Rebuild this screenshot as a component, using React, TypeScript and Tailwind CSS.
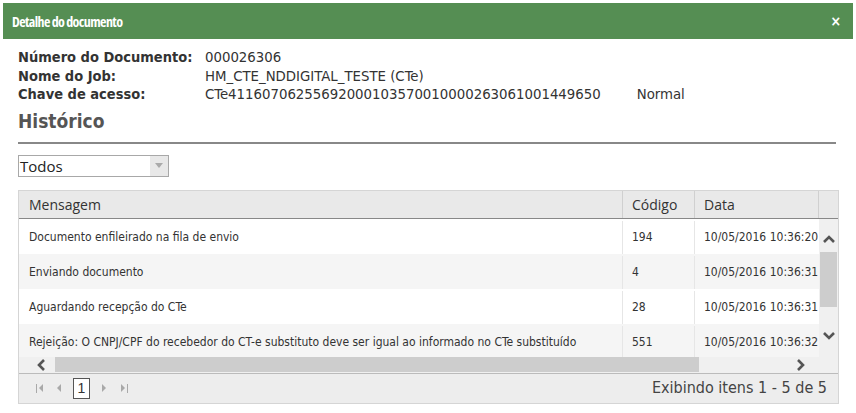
import React from "react";

const rows = [
  { m: "Documento enfileirado na fila de envio", c: "194", d: "10/05/2016 10:36:20" },
  { m: "Enviando documento", c: "4", d: "10/05/2016 10:36:31" },
  { m: "Aguardando recepção do CTe", c: "28", d: "10/05/2016 10:36:31" },
  { m: "Rejeição: O CNPJ/CPF do recebedor do CT-e substituto deve ser igual ao informado no CTe substituído", c: "551", d: "10/05/2016 10:36:32" },
];

const tah = { fontFamily: '"DejaVu Sans Condensed", "DejaVu Sans", sans-serif', fontStretch: "semi-condensed" } as React.CSSProperties;
const seg = { fontFamily: '"Open Sans", "Noto Sans", sans-serif', fontStretch: "normal" } as React.CSSProperties;
const title = { fontFamily: '"Open Sans", "Noto Sans", sans-serif', fontStretch: "75%" } as React.CSSProperties;

function Chevron({ dir, className }: { dir: "up" | "down" | "left" | "right"; className?: string }) {
  const d =
    dir === "up" ? "M2 9 L7 4 L12 9" : dir === "down" ? "M2 5 L7 10 L12 5" : dir === "left" ? "M9 2 L4 7 L9 12" : "M5 2 L10 7 L5 12";
  return (
    <svg width="14" height="14" viewBox="0 0 14 14" className={className}>
      <path d={d} fill="none" stroke="#555" strokeWidth="2.6" />
    </svg>
  );
}

function Tri({ dir }: { dir: "left" | "right" }) {
  return (
    <svg width="6" height="10" viewBox="0 0 6 10">
      {dir === "left" ? <path d="M5 1 L1 5 L5 9 Z" fill="#a9a9a9" /> : <path d="M1 1 L5 5 L1 9 Z" fill="#a9a9a9" />}
    </svg>
  );
}

export default function App() {
  return (
    <div className="w-[856px] h-[413px] bg-white p-[3px] overflow-hidden" style={tah}>
      <div className="h-[36px] bg-[#558e53] flex items-center justify-between pl-[9px] pr-[12px]">
        <span className="text-white font-bold text-[14px] tracking-[-0.6px]" style={title}>Detalhe do documento</span>
        <span className="text-white font-bold text-[14px] leading-none">×</span>
      </div>
      <div className="px-[15px]">
        <div className="pt-[9px] text-[14.5px] leading-[18.5px] text-[#333]">
          <div className="flex">
            <span className="w-[187px] font-bold">Número do Documento:</span>
            <span className="text-[14.8px]">000026306</span>
          </div>
          <div className="flex">
            <span className="w-[187px] font-bold">Nome do Job:</span>
            <span className="text-[14.8px]">HM_CTE_NDDIGITAL_TESTE (CTe)</span>
          </div>
          <div className="flex">
            <span className="w-[187px] font-bold">Chave de acesso:</span>
            <span className="text-[14.8px]">CTe41160706255692000103570010000263061001449650</span>
            <span className="ml-[36px] text-[14.8px]">Normal</span>
          </div>
        </div>
        <div className="mt-[5px] text-[19px] font-bold text-[#555] leading-[24px]">Histórico</div>
        <div className="mt-[9px] h-[2px] bg-[#888] w-[818px]"></div>
        <div className="mt-[11px] w-[151px] h-[22px] border border-[#a8a8a8] flex bg-white">
          <span className="flex-1 text-[15px] leading-[20px] pl-[1px] text-[#222]" style={seg}>Todos</span>
          <span className="w-[18px] bg-[#e8e8e8] flex items-center justify-center">
            <svg width="8" height="5" viewBox="0 0 8 5"><path d="M0 0 L8 0 L4 5 Z" fill="#aaa" /></svg>
          </span>
        </div>
        <div className="mt-[13px] w-[821px] border border-[#d5d5d5]">
          <div className="flex h-[28px] bg-[#e9e9e9] border-b border-[#888] text-[14px] text-[#333]" style={seg}>
            <div className="w-[604px] pl-[10px] flex items-center border-r border-[#d0d0d0]">Mensagem</div>
            <div className="w-[72px] pl-[9px] flex items-center border-r border-[#d0d0d0]">Código</div>
            <div className="w-[124px] pl-[9px] flex items-center border-r border-[#d0d0d0]">Data</div>
            <div className="flex-1"></div>
          </div>
          <div className="flex h-[138px] overflow-hidden">
            <div className="w-[800px]">
              {rows.map((r, i) => (
                <div key={i} className={`flex h-[35px] pt-[2px] shrink-0 text-[12px] text-[#333] ${i % 2 === 1 ? "bg-[#f5f5f5]" : "bg-white"}`}>
                  <div className="w-[604px] pl-[10px] flex items-center border-r border-[#e6e6e6] whitespace-nowrap overflow-hidden">{r.m}</div>
                  <div className="w-[72px] pl-[9px] flex items-center border-r border-[#e6e6e6]">{r.c}</div>
                  <div className="w-[124px] pl-[9px] flex items-center whitespace-nowrap">{r.d}</div>
                </div>
              ))}
            </div>
            <div className="flex-1 bg-[#f0f0f0] flex flex-col items-center">
              <Chevron dir="up" className="mt-[14px]" />
              <div className="w-[17px] h-[55px] bg-[#cdcdcd] mt-[5px]"></div>
              <Chevron dir="down" className="mt-[21px]" />
            </div>
          </div>
          <div className="h-[17px] bg-[#f0f0f0] flex items-center border-b border-[#bbb]">
            <Chevron dir="left" className="ml-[16px]" />
            <div className="ml-[6px] w-[644px] h-[15px] bg-[#cdcdcd]"></div>
            <Chevron dir="right" className="ml-[94px]" />
          </div>
          <div className="h-[29px] bg-[#ededed] flex items-center justify-between pr-[11px]">
            <div className="flex items-center pl-[17px]">
              <span className="flex items-center gap-[1px]"><span className="w-[1px] h-[9px] bg-[#a9a9a9]"></span><Tri dir="left" /></span>
              <span className="ml-[12px]"><Tri dir="left" /></span>
              <span className="ml-[11px] w-[17px] h-[21px] border border-[#555] bg-white flex items-center justify-center text-[14px] text-[#333]" style={{ fontFamily: '"Liberation Sans", sans-serif' }}>1</span>
              <span className="ml-[11px]"><Tri dir="right" /></span>
              <span className="ml-[13px] flex items-center gap-[1px]"><Tri dir="right" /><span className="w-[1px] h-[9px] bg-[#a9a9a9]"></span></span>
            </div>
            <span className="text-[16px] text-[#444]">Exibindo itens 1 - 5 de 5</span>
          </div>
        </div>
      </div>
    </div>
  );
}
